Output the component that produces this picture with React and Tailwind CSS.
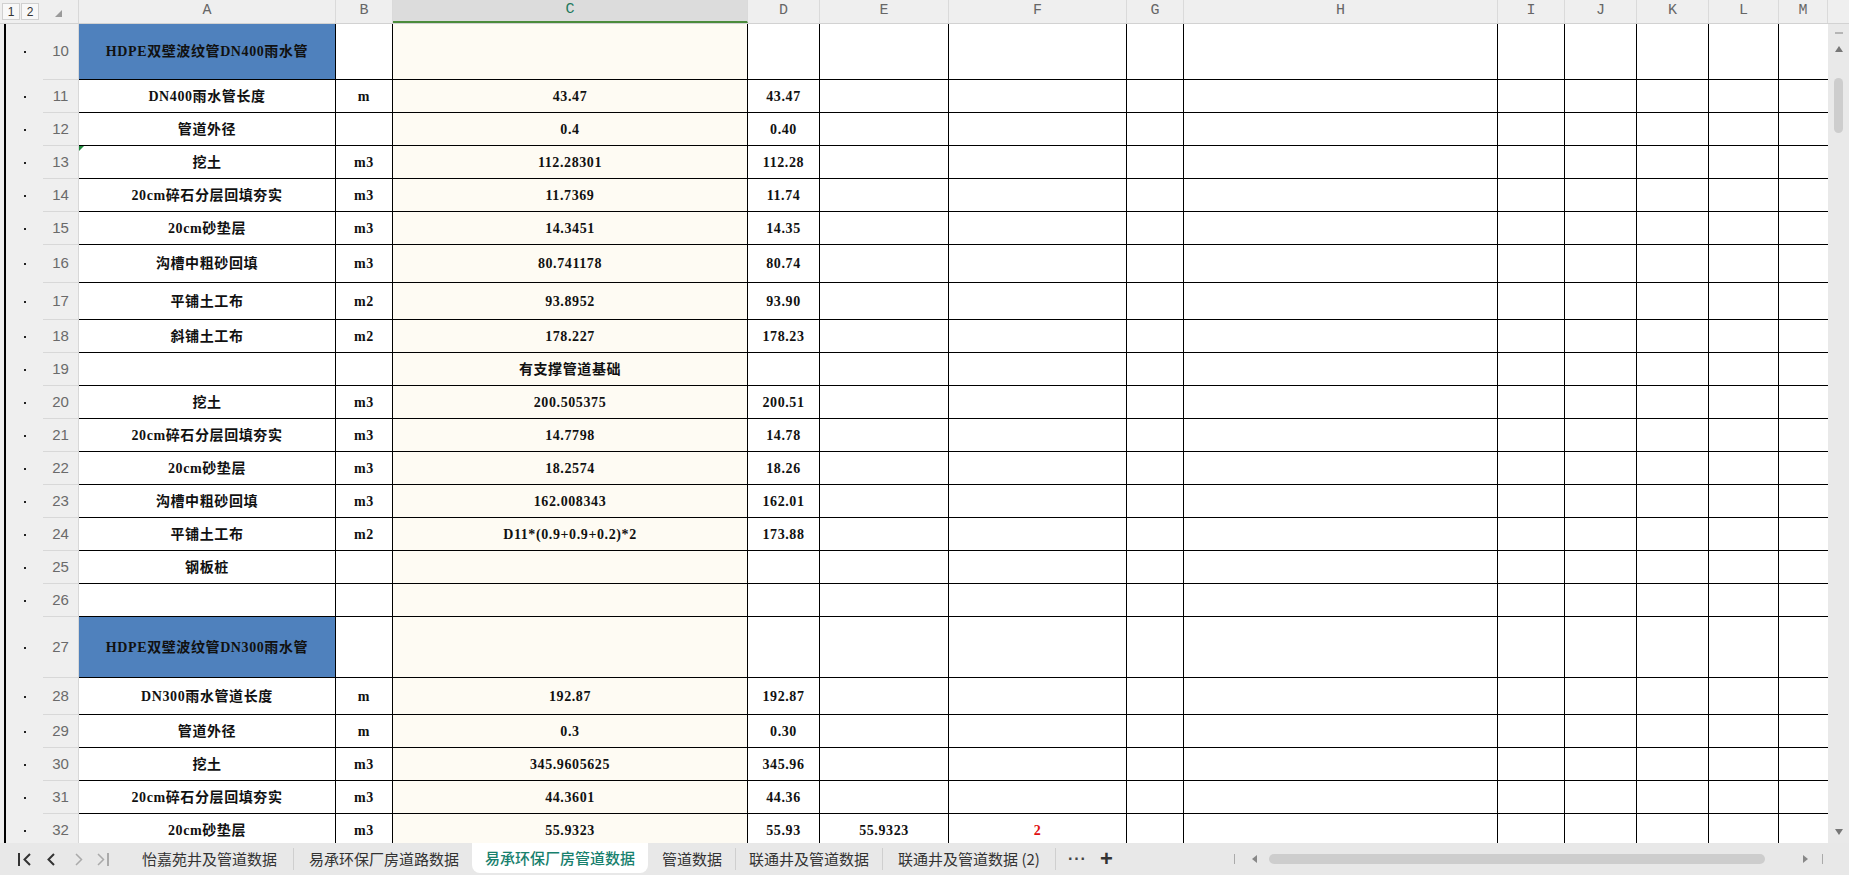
import React from 'react';

const COLS = [
  { key: 'A', w: 'w-[257px]' },
  { key: 'B', w: 'w-[57px]' },
  { key: 'C', w: 'w-[355px]' },
  { key: 'D', w: 'w-[72px]' },
  { key: 'E', w: 'w-[129px]' },
  { key: 'F', w: 'w-[178px]' },
  { key: 'G', w: 'w-[57px]' },
  { key: 'H', w: 'w-[314px]' },
  { key: 'I', w: 'w-[67px]' },
  { key: 'J', w: 'w-[72px]' },
  { key: 'K', w: 'w-[72px]' },
  { key: 'L', w: 'w-[70px]' },
  { key: 'M', w: 'w-[49px]' },
];

const ROWS = [
  { n: 10, h: 'h-[56px]', a: 'HDPE双壁波纹管DN400雨水管', head: true },
  { n: 11, h: 'h-[33px]', a: 'DN400雨水管长度', b: 'm', c: '43.47', d: '43.47' },
  { n: 12, h: 'h-[33px]', a: '管道外径', c: '0.4', d: '0.40' },
  { n: 13, h: 'h-[33px]', a: '挖土', b: 'm3', c: '112.28301', d: '112.28', mark: true },
  { n: 14, h: 'h-[33px]', a: '20cm碎石分层回填夯实', b: 'm3', c: '11.7369', d: '11.74' },
  { n: 15, h: 'h-[33px]', a: '20cm砂垫层', b: 'm3', c: '14.3451', d: '14.35' },
  { n: 16, h: 'h-[38px]', a: '沟槽中粗砂回填', b: 'm3', c: '80.741178', d: '80.74' },
  { n: 17, h: 'h-[37px]', a: '平铺土工布', b: 'm2', c: '93.8952', d: '93.90' },
  { n: 18, h: 'h-[33px]', a: '斜铺土工布', b: 'm2', c: '178.227', d: '178.23' },
  { n: 19, h: 'h-[33px]', c: '有支撑管道基础' },
  { n: 20, h: 'h-[33px]', a: '挖土', b: 'm3', c: '200.505375', d: '200.51' },
  { n: 21, h: 'h-[33px]', a: '20cm碎石分层回填夯实', b: 'm3', c: '14.7798', d: '14.78' },
  { n: 22, h: 'h-[33px]', a: '20cm砂垫层', b: 'm3', c: '18.2574', d: '18.26' },
  { n: 23, h: 'h-[33px]', a: '沟槽中粗砂回填', b: 'm3', c: '162.008343', d: '162.01' },
  { n: 24, h: 'h-[33px]', a: '平铺土工布', b: 'm2', c: 'D11*(0.9+0.9+0.2)*2', d: '173.88' },
  { n: 25, h: 'h-[33px]', a: '钢板桩' },
  { n: 26, h: 'h-[33px]' },
  { n: 27, h: 'h-[61px]', a: 'HDPE双壁波纹管DN300雨水管', head: true },
  { n: 28, h: 'h-[37px]', a: 'DN300雨水管道长度', b: 'm', c: '192.87', d: '192.87' },
  { n: 29, h: 'h-[33px]', a: '管道外径', b: 'm', c: '0.3', d: '0.30' },
  { n: 30, h: 'h-[33px]', a: '挖土', b: 'm3', c: '345.9605625', d: '345.96' },
  { n: 31, h: 'h-[33px]', a: '20cm碎石分层回填夯实', b: 'm3', c: '44.3601', d: '44.36' },
  { n: 32, h: 'h-[33px]', a: '20cm砂垫层', b: 'm3', c: '55.9323', d: '55.93', e: '55.9323', f: '2' },
];

const TABS = [
  { label: '怡嘉苑井及管道数据', pad: 'pl-[14px] pr-[16px]', sep: true },
  { label: '易承环保厂房道路数据', pad: 'pl-[15px] pr-[13px]', sep: false },
  { label: '易承环保厂房管道数据', pad: 'px-[13px]', sep: false, active: true },
  { label: '管道数据', pad: 'pl-[14px] pr-[13px]', sep: true },
  { label: '联通井及管道数据', pad: 'px-[13px]', sep: true },
  { label: '联通井及管道数据 (2)', pad: 'px-[15px]', sep: true },
];

function Cell({ col, row, children, last }) {
  let bg = 'bg-white';
  if (col.key === 'C') bg = 'bg-[#fefbf3]';
  if (col.key === 'A' && row.head) bg = 'bg-[#4f81bd]';
  return (
    <div
      className={`${col.w} ${bg} relative flex shrink-0 items-center justify-center border-b border-black ${
        last ? '' : 'border-r'
      }`}
    >
      {row.mark && col.key === 'A' && (
        <span className="absolute left-0 top-0 h-0 w-0 border-r-[5px] border-t-[5px] border-r-transparent border-t-[#1e8a3c]" />
      )}
      <span className="whitespace-nowrap text-[14px] font-bold tracking-[0.6px] text-[#111]">{children}</span>
    </div>
  );
}

function SheetRow({ row }) {
  const values = { A: row.a, B: row.b, C: row.c, D: row.d, E: row.e };
  return (
    <div className={`flex ${row.h} shrink-0`}>
      <div className="flex w-[43px] shrink-0 items-center bg-[#efefef] pl-[4px]">
        <div className="w-[2px] self-stretch bg-black" />
        <div className="ml-[18px] h-[2px] w-[2px] bg-[#222]" />
      </div>
      <div className="flex w-[36px] shrink-0 items-center justify-center border-b border-r border-[#d8d8d8] bg-[#efefef] font-['Liberation_Sans',sans-serif] text-[15px] text-[#6a6a6a]">
        {row.n}
      </div>
      {COLS.map((col, i) => (
        <Cell key={col.key} col={col} row={row} last={i === COLS.length - 1}>
          {col.key === 'F' && row.f ? <span className="text-[#e01010]">{row.f}</span> : values[col.key]}
        </Cell>
      ))}
    </div>
  );
}

function HeaderRow() {
  return (
    <div className="flex h-[24px] shrink-0 border-b border-[#d2d2d2] bg-[#efefef]">
      <div className="flex w-[43px] shrink-0 items-start gap-[1px] pl-[2px] pt-[3px] font-['Liberation_Sans',sans-serif] text-[12px] text-[#333]">
        <div className="flex h-[17px] w-[18px] items-center justify-center border border-[#d0d0d0] bg-[#f8f8f8]">1</div>
        <div className="flex h-[17px] w-[18px] items-center justify-center border border-[#d0d0d0] bg-[#f8f8f8]">2</div>
      </div>
      <div className="flex w-[36px] shrink-0 items-center justify-center border-r border-[#d8d8d8]">
        <span className="ml-[-4px] mt-[4px] h-0 w-0 border-b-[7px] border-l-[7px] border-b-[#9a9a9a] border-l-transparent" />
      </div>
      {COLS.map((col) => (
        <div
          key={col.key}
          className={`${col.w} flex shrink-0 items-center justify-center border-r border-[#dadada] font-['Liberation_Mono',monospace] text-[15px] ${
            col.key === 'C' ? 'border-b-2 border-b-[#4b8b3b] bg-[#dcdcdc] text-[#1f7a5c]' : 'text-[#666]'
          }`}
        >
          {col.key}
        </div>
      ))}
      <div className="flex-1" />
    </div>
  );
}

function VScroll() {
  return (
    <div className="flex w-[21px] shrink-0 flex-col items-center bg-[#e9e9e9]">
      <div className="mt-[8px] h-[2px] w-[8px] bg-[#b5b5b5]" />
      <span className="mt-[12px] h-0 w-0 border-x-[4px] border-b-[6px] border-x-transparent border-b-[#777]" />
      <div className="mt-[26px] h-[55px] w-[9px] rounded-full bg-[#cdcdcd]" />
      <div className="flex-1" />
      <span className="mb-[8px] h-0 w-0 border-x-[4px] border-t-[6px] border-x-transparent border-t-[#777]" />
    </div>
  );
}

function TabBar() {
  return (
    <div className="flex h-[32px] shrink-0 items-center bg-[#e8e8e8] font-['Noto_Sans_CJK_SC',sans-serif] text-[15px] text-[#333]">
      <div className="flex w-[128px] shrink-0 items-center pl-[18px]">
        <span className="flex items-center">
          <span className="mr-[2px] h-[13px] w-[2px] bg-[#333]" />
          <svg width="9" height="13" viewBox="0 0 9 13"><path d="M8 1 L2.5 6.5 L8 12" fill="none" stroke="#333" strokeWidth="2" /></svg>
        </span>
        <svg className="ml-[16px]" width="8" height="13" viewBox="0 0 8 13"><path d="M7 1 L1.5 6.5 L7 12" fill="none" stroke="#333" strokeWidth="2" /></svg>
        <svg className="ml-[20px]" width="8" height="13" viewBox="0 0 8 13"><path d="M1 1 L6.5 6.5 L1 12" fill="none" stroke="#aaa" strokeWidth="1.5" /></svg>
        <span className="ml-[14px] flex items-center">
          <svg width="8" height="13" viewBox="0 0 8 13"><path d="M1 1 L6.5 6.5 L1 12" fill="none" stroke="#aaa" strokeWidth="1.5" /></svg>
          <span className="ml-[2px] h-[13px] w-[2px] bg-[#aaa]" />
        </span>
      </div>
      {TABS.map((t) => (
        <React.Fragment key={t.label}>
          {t.active ? (
            <div className={`flex h-[30px] items-center self-start rounded-b-[8px] bg-white ${t.pad} font-medium text-[#17806d]`}>
              {t.label}
            </div>
          ) : (
            <div className={`flex h-full items-center ${t.pad} whitespace-nowrap`}>{t.label}</div>
          )}
          {t.sep && <div className="h-[22px] w-px bg-[#cfcfcf]" />}
        </React.Fragment>
      ))}
      <span className="ml-[12px] font-['Liberation_Sans',sans-serif] text-[16px] font-bold tracking-[1px] text-[#444]">···</span>
      <span className="ml-[13px] font-['Liberation_Sans',sans-serif] text-[22px] font-bold leading-none text-[#333]">+</span>
      <div className="flex-1" />
      <div className="h-[10px] w-px bg-[#aaa]" />
      <span className="ml-[17px] h-0 w-0 border-y-[4px] border-r-[5px] border-y-transparent border-r-[#888]" />
      <div className="ml-[12px] h-[10px] w-[496px] rounded-full bg-[#cdcdcd]" />
      <div className="w-[38px]" />
      <span className="h-0 w-0 border-y-[4px] border-l-[5px] border-y-transparent border-l-[#888]" />
      <div className="ml-[14px] h-[10px] w-px bg-[#aaa]" />
      <div className="w-[26px]" />
    </div>
  );
}

export default function App() {
  return (
    <div className="flex h-[875px] w-[1849px] flex-col overflow-hidden bg-white font-['Liberation_Serif','Noto_Sans_CJK_SC',serif]">
      <HeaderRow />
      <div className="flex min-h-0 flex-1">
        <div className="flex w-[1828px] shrink-0 flex-col overflow-hidden">
          {ROWS.map((row) => (
            <SheetRow key={row.n} row={row} />
          ))}
        </div>
        <VScroll />
      </div>
      <TabBar />
    </div>
  );
}
